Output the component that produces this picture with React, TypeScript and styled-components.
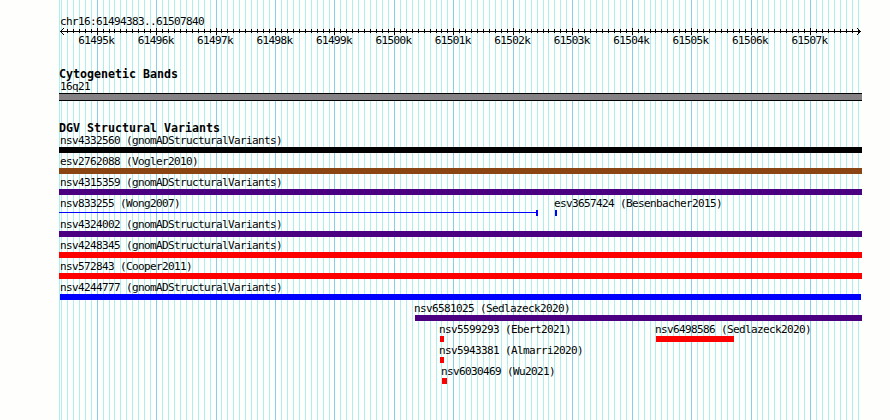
import React from "react";
import styled, { createGlobalStyle } from "styled-components";

interface Variant {
  name: string;
  start: number;
  end: number;
  color: string;
  kind?: "bar" | "span";
  labelShift?: number;
}

const LEFT = 59;
const RIGHT = 862;
const STEP = 5.945;
const FIRST_MAJOR = 97.15;

const INDIGO = "#4b0082";
const RED = "#ff0000";
const BLUE = "#0000ff";

// every tenth line marks 1 kb
const lines: { x: number; major: boolean; kb: number }[] = [];
for (let i = -6; i <= 128; i++) {
  const x = Math.floor(FIRST_MAJOR + i * STEP);
  lines.push({ x, major: i % 10 === 0, kb: 61495 + i / 10 });
}

const full = (name: string, color: string): Variant => ({
  name,
  start: LEFT,
  end: RIGHT,
  color,
  labelShift: 1,
});

const rows: Variant[][] = [
  [full("nsv4332560 (gnomADStructuralVariants)", "#000000")],
  [full("esv2762088 (Vogler2010)", "#8b4513")],
  [full("nsv4315359 (gnomADStructuralVariants)", INDIGO)],
  [
    { name: "nsv833255 (Wong2007)", start: 59, end: 538, color: BLUE, kind: "span", labelShift: 1 },
    { name: "esv3657424 (Besenbacher2015)", start: 555, end: 557, color: BLUE, labelShift: -1 },
  ],
  [full("nsv4324002 (gnomADStructuralVariants)", INDIGO)],
  [full("nsv4248345 (gnomADStructuralVariants)", RED)],
  [full("nsv572843 (Cooper2011)", RED)],
  [{ name: "nsv4244777 (gnomADStructuralVariants)", start: 60, end: 861, color: BLUE }],
  [{ name: "nsv6581025 (Sedlazeck2020)", start: 415, end: RIGHT, color: INDIGO, labelShift: -1 }],
  [
    { name: "nsv5599293 (Ebert2021)", start: 440, end: 444, color: RED, labelShift: -1 },
    { name: "nsv6498586 (Sedlazeck2020)", start: 656, end: 734, color: RED, labelShift: -1 },
  ],
  [{ name: "nsv5943381 (Almarri2020)", start: 440, end: 444, color: RED, labelShift: -1 }],
  [{ name: "nsv6030469 (Wu2021)", start: 442, end: 447, color: RED, labelShift: -1 }],
];

function App() {
  return (
    <Browser>
      <GlobalStyle />
      <Grid width="890" height="420" shapeRendering="crispEdges">
        <rect x={LEFT} y="0" width="1" height="420" fill="#afeeee" />
        {lines.map((l) => (
          <rect
            key={l.x}
            x={l.x}
            y="0"
            width="1"
            height="420"
            fill={l.major ? "#87ceeb" : "#afeeee"}
          />
        ))}
      </Grid>
      <Panel>
        <Region>chr16:61494383..61507840</Region>
        <Ruler />
        <KbLabels>
          {lines
            .filter((l) => l.major)
            .map((l) => (
              <KbLabel key={l.x}>{l.kb}k</KbLabel>
            ))}
        </KbLabels>
        <Track>
          <TrackTitle>Cytogenetic Bands</TrackTitle>
          <Label $shift={1}>16q21</Label>
          <Band />
        </Track>
        <Track>
          <TrackTitle>DGV Structural Variants</TrackTitle>
          {rows.map((row, index) => (
            <Row key={index}>
              {row.map((v, i) => (
                <Feature
                  key={v.name}
                  style={{
                    width: v.end - v.start,
                    marginLeft: v.start - (i > 0 ? row[i - 1].end : LEFT),
                  }}
                >
                  <Label $shift={v.labelShift || 0}>{v.name}</Label>
                  {v.kind === "span" ? (
                    <Span $color={v.color} />
                  ) : (
                    <Bar $color={v.color} />
                  )}
                </Feature>
              ))}
            </Row>
          ))}
        </Track>
      </Panel>
    </Browser>
  );
}

const Ruler = () => (
  <RulerSvg width="803" height="9" viewBox="59 27 803 9" shapeRendering="crispEdges">
    <rect x="60" y="31" width="801" height="1" />
    {lines.slice(1).map((l) => (
      <rect
        key={l.x}
        x={l.x}
        y={l.major ? 28 : 29}
        width="1"
        height={l.major ? 7 : 4}
      />
    ))}
    {/* arrow heads */}
    {[1, 2, 3].map((n) => (
      <React.Fragment key={n}>
        <rect x={60 + n} y={31 - n} width="1" height="1" />
        <rect x={60 + n} y={31 + n} width="1" height="1" />
        <rect x={860 - n} y={31 - n} width="1" height="1" />
        <rect x={860 - n} y={31 + n} width="1" height="1" />
      </React.Fragment>
    ))}
  </RulerSvg>
);

const GlobalStyle = createGlobalStyle`
  body {
    margin: 0;
    background: #fefefc;
  }
`;

const Browser = styled.div`
  position: relative;
  width: 890px;
  height: 420px;
  overflow: hidden;
  color: #000;
  font-family: "DejaVu Sans Mono", monospace;
  font-size: 11px;
  letter-spacing: -0.622px;
  line-height: 12px;
  white-space: nowrap;
`;

const Grid = styled.svg`
  position: absolute;
  top: 0;
  left: 0;
`;

const Panel = styled.div`
  position: relative;
  width: 803px;
  padding: 16px 0 0 59px;
`;

const Region = styled.div`
  height: 11px;
  padding-left: 1px;
`;

const RulerSvg = styled.svg`
  display: block;
`;

const KbLabels = styled.div`
  display: flex;
  height: 12px;
  margin: -1px 0 21px 7.5px;
`;

const KbLabel = styled.div`
  flex: 0 0 59.45px;
  text-align: center;
`;

const Track = styled.div`
  margin-bottom: 21px;
`;

const TrackTitle = styled.div`
  height: 13px;
  line-height: 13px;
  font-size: 11.63px;
  font-weight: bold;
  letter-spacing: 0;
`;

const Label = styled.div<{ $shift: number }>`
  height: 12px;
  margin-left: ${(p) => p.$shift}px;
`;

const Band = styled.div`
  box-sizing: border-box;
  height: 8px;
  border: solid #000;
  border-width: 1px 0;
  background: #848284;
`;

const Row = styled.div`
  display: flex;
  height: 21px;
`;

const Feature = styled.div`
  flex: none;
`;

const Bar = styled.div<{ $color: string }>`
  height: 6px;
  background: ${(p) => p.$color};
`;

const Span = styled.div<{ $color: string }>`
  height: 6px;
  border-right: 2px solid ${(p) => p.$color};
  box-sizing: border-box;
  background: linear-gradient(${(p) => p.$color}, ${(p) => p.$color}) 0 2px / 100% 1px no-repeat;
`;

export default App;
